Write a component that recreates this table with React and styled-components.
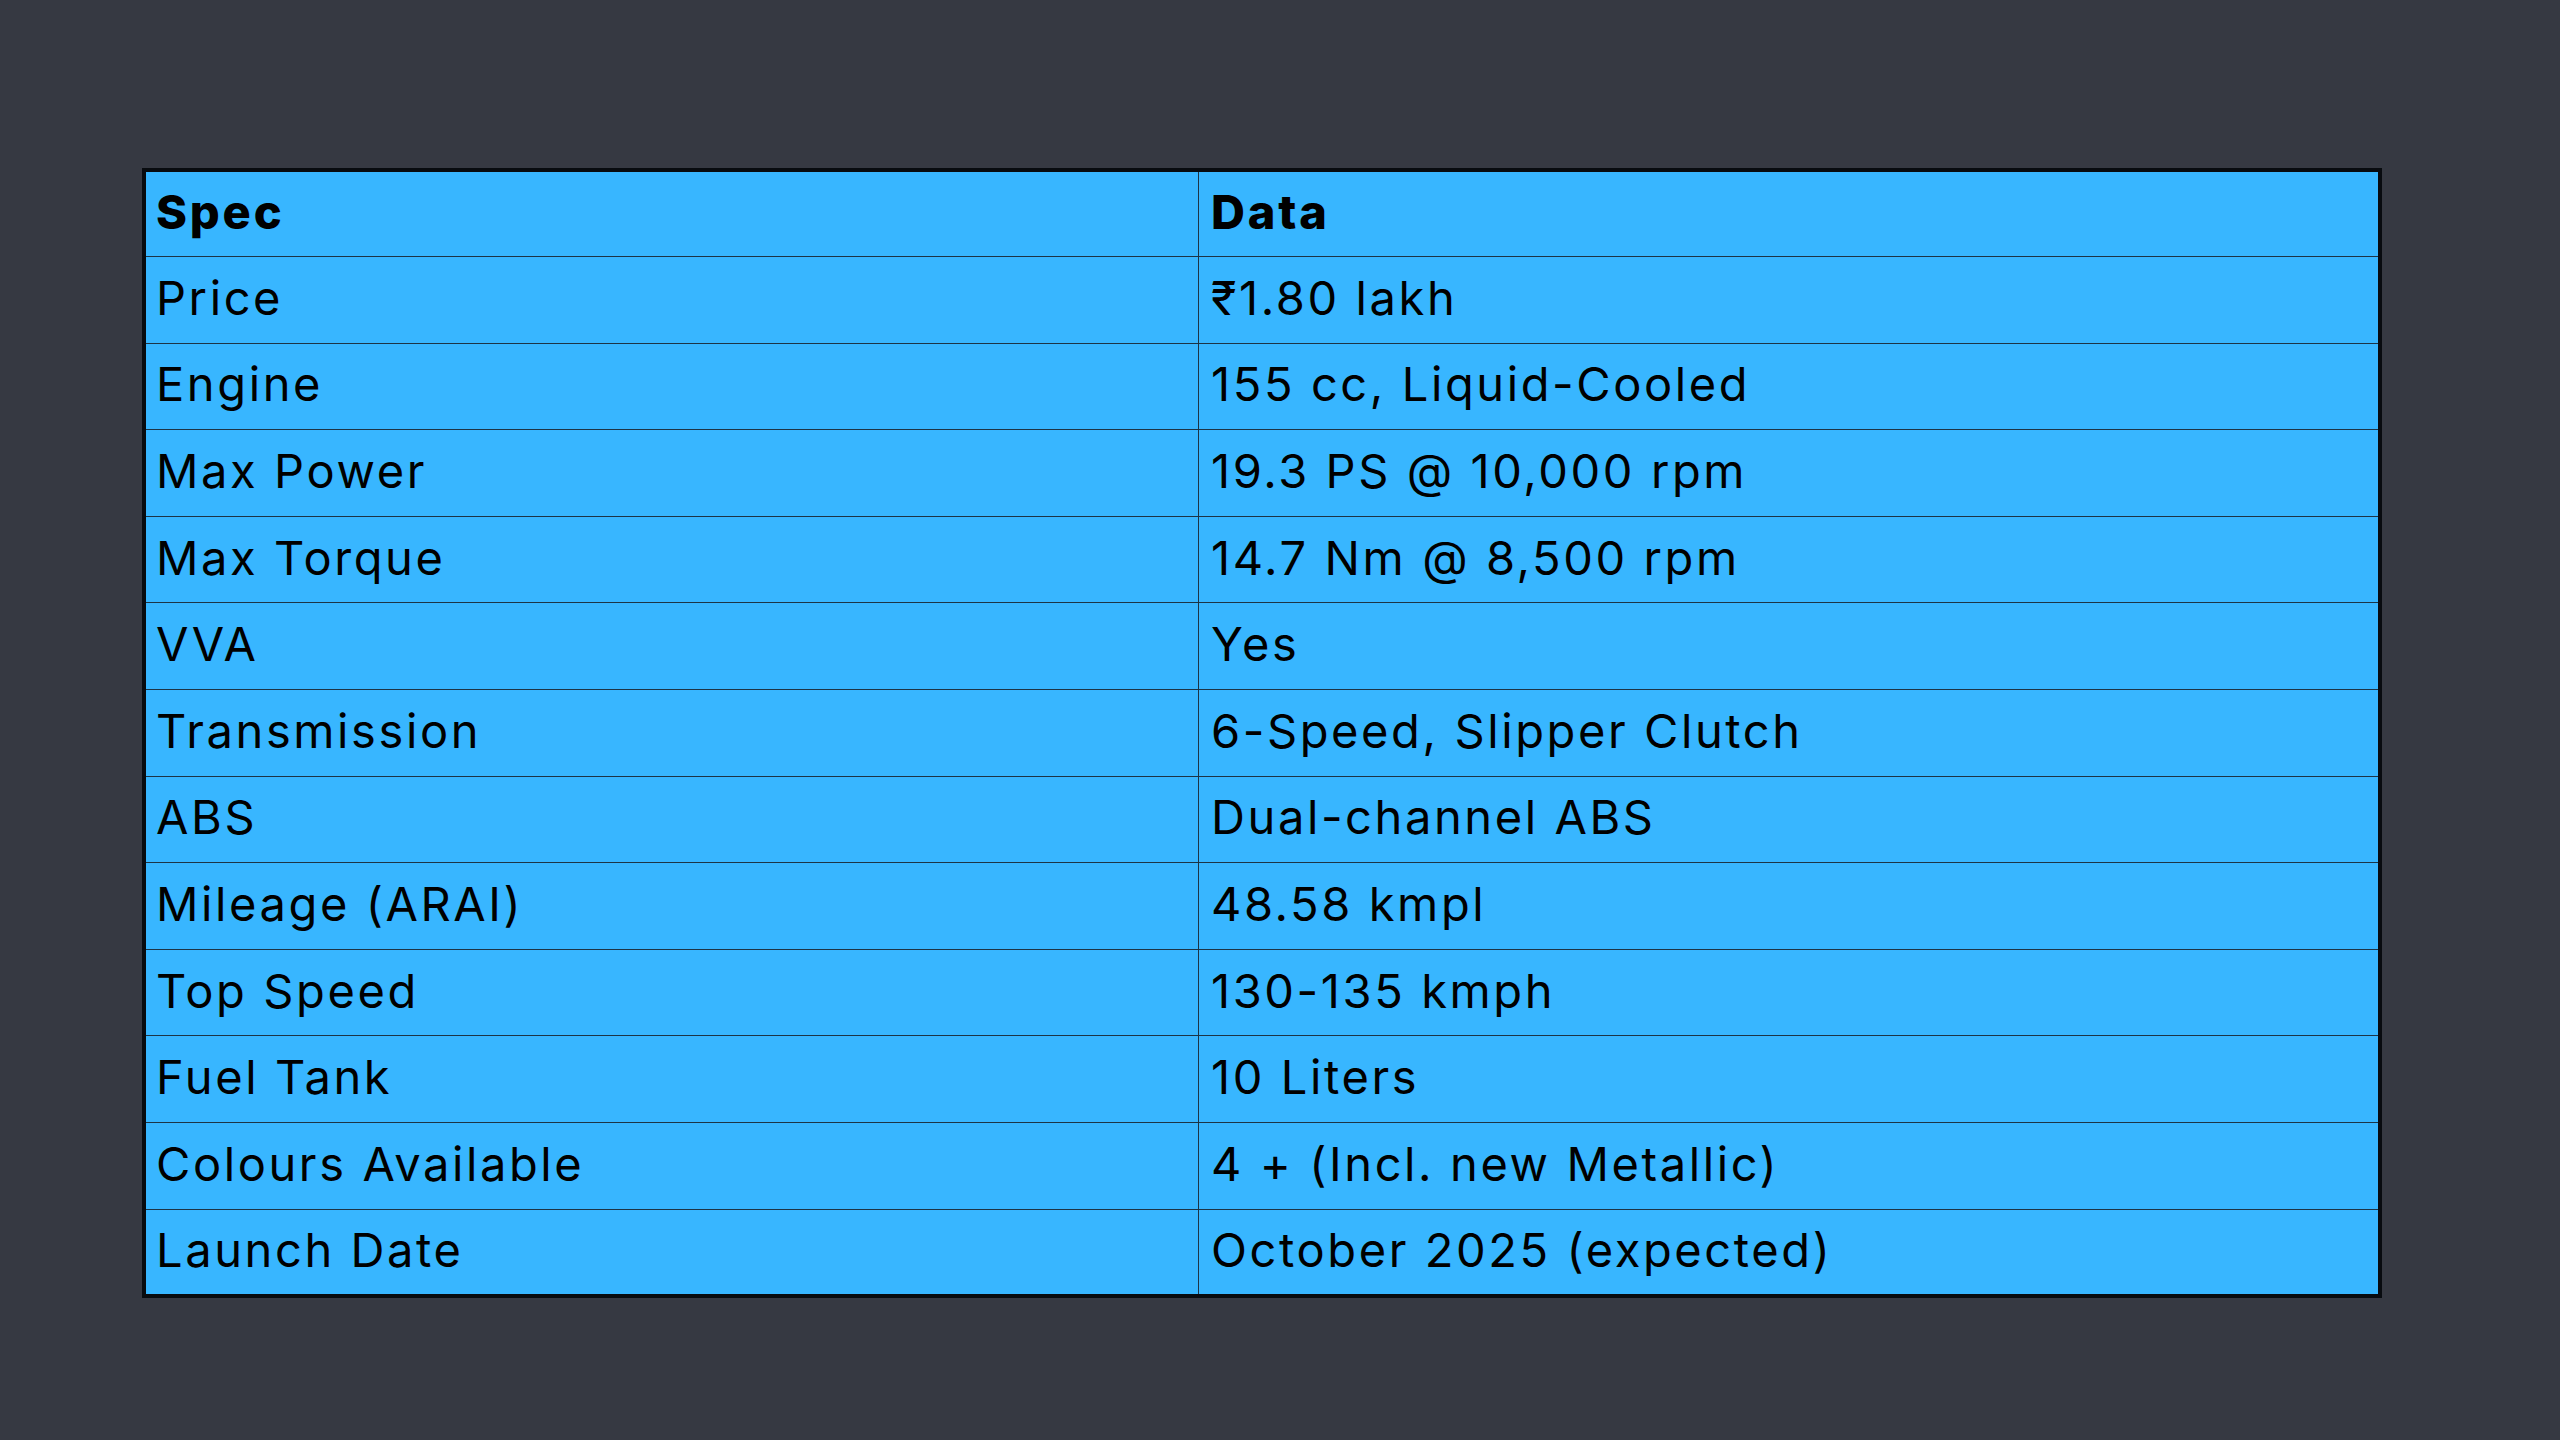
import React from "react";
import styled, { createGlobalStyle } from "styled-components";

const Global = createGlobalStyle`
  html, body { margin: 0; padding: 0; background: #363942; }
  body { font-family: Inter, "Noto Sans", "DejaVu Sans", sans-serif; }
`;

const Page = styled.div`
  width: 2560px;
  height: 1440px;
  box-sizing: border-box;
  padding: 168px 178px 0 142px;
  background: #363942;
`;

const Table = styled.table`
  width: 2240px;
  border-collapse: collapse;
  border: 4px solid #080b0f;
  background: #38b6ff;
  table-layout: fixed;
`;

const Row = styled.tr`
  height: 86.6px;
`;

const Cell = styled.td`
  border: 1.5px solid #1d3445;
  padding: 0 0 5px ${(p) => (p.$data ? "12px" : "10px")};
  width: ${(p) => (p.$data ? "auto" : "1042px")};
  font-size: 47px;
  font-weight: ${(p) => (p.$head ? 800 : 400)};
  color: #000;
  vertical-align: middle;
  white-space: nowrap;
  letter-spacing: ${(p) => (p.$head ? "2.8px" : "2.6px")};
`;

const rows = [
  ["Price", "₹1.80 lakh"],
  ["Engine", "155 cc, Liquid-Cooled"],
  ["Max Power", "19.3 PS @ 10,000 rpm"],
  ["Max Torque", "14.7 Nm @ 8,500 rpm"],
  ["VVA", "Yes"],
  ["Transmission", "6-Speed, Slipper Clutch"],
  ["ABS", "Dual-channel ABS"],
  ["Mileage (ARAI)", "48.58 kmpl"],
  ["Top Speed", "130-135 kmph"],
  ["Fuel Tank", "10 Liters"],
  ["Colours Available", "4 + (Incl. new Metallic)"],
  ["Launch Date", "October 2025 (expected)"],
];

export default function App() {
  return (
    <>
      <Global />
      <Page>
        <Table>
          <tbody>
            <Row>
              <Cell $head>Spec</Cell>
              <Cell $head $data>Data</Cell>
            </Row>
            {rows.map(([k, v]) => (
              <Row key={k}>
                <Cell>{k}</Cell>
                <Cell $data>{v}</Cell>
              </Row>
            ))}
          </tbody>
        </Table>
      </Page>
    </>
  );
}
